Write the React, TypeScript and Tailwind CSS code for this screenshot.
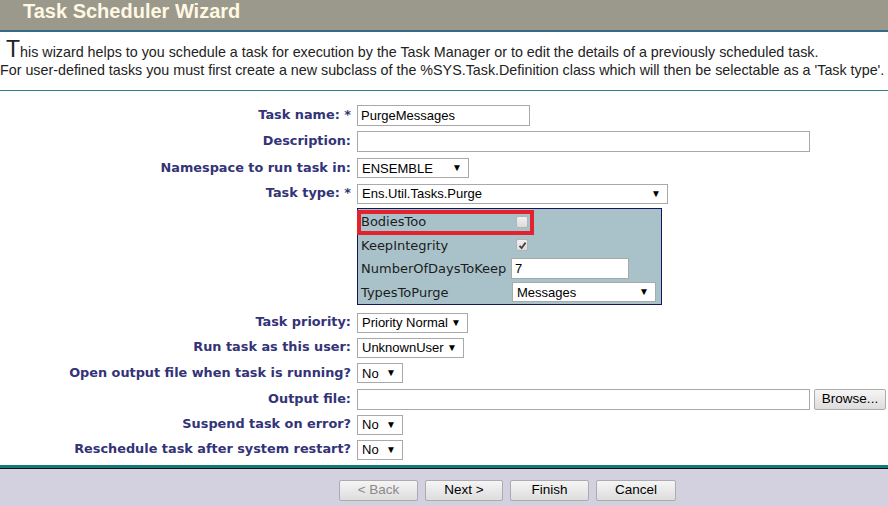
import React from "react";

const labelCls =
  "w-[351px] shrink-0 text-right font-bold text-[12.85px] text-[#333377] pr-0 leading-none";
const lblFont = { fontFamily: "Verdana, 'DejaVu Sans', sans-serif" } as React.CSSProperties;

function Select({ value, w }: { value: string; w: string }) {
  return (
    <div
      className={`${w} h-[20px] bg-white border border-[#a9a9a9] flex items-center justify-between pl-[4px] pr-[6px] text-[13px] text-black font-['Liberation_Sans',Arial,sans-serif]`}
    >
      <span className="leading-none">{value}</span>
      <span className="text-[10px] leading-none">▼</span>
    </div>
  );
}

function Input({ value, w }: { value?: string; w: string }) {
  return (
    <div
      className={`${w} h-[21px] bg-white border border-[#a9a9a9] flex items-center pl-[3px] text-[13px] text-black font-['Liberation_Sans',Arial,sans-serif]`}
    >
      <span className="leading-none">{value}</span>
    </div>
  );
}

function Row({ label, h, children }: { label: string; h: string; children: React.ReactNode }) {
  return (
    <div className={`flex items-center ${h}`}>
      <div className={labelCls} style={lblFont}>
        {label}
      </div>
      <div className="ml-[6px] flex items-center gap-[4px]">{children}</div>
    </div>
  );
}

function Btn({ label, disabled, w }: { label: string; disabled?: boolean; w: string }) {
  return (
    <div
      className={`${w} h-[21px] border border-[#acacac] rounded-[2px] bg-gradient-to-b from-[#f5f5f5] to-[#dddddd] flex items-center justify-center text-[13.5px] font-['Liberation_Sans',Arial,sans-serif] ${
        disabled ? "text-[#8a8a8a]" : "text-black"
      }`}
    >
      {label}
    </div>
  );
}

export default function App() {
  return (
    <div className="w-[888px] h-[506px] bg-white overflow-hidden flex flex-col font-['Liberation_Sans',Arial,sans-serif]">
      {/* Header */}
      <div className="h-[30px] bg-[#9b998c] flex items-start pl-[23px]">
        <span className="text-[20px] font-bold text-[#fff8e2] leading-none mt-[1px]">
          Task Scheduler Wizard
        </span>
      </div>
      <div className="h-[2px] bg-[#356a86]" />

      {/* Intro */}
      <div className="h-[58px] text-[14.3px] text-[#222] pt-[6px]">
        <div className="leading-[20px] pl-[6px]">
          <span className="text-[23px] leading-none">T</span>his wizard helps to you schedule a task for
          execution by the Task Manager or to edit the details of a previously scheduled task.
        </div>
        <div className="leading-[17px]">
          For user-defined tasks you must first create a new subclass of the %SYS.Task.Definition class
          which will then be selectable as a 'Task type'.
        </div>
      </div>
      <div className="h-[1px] bg-[#2f8088]" />

      {/* Form */}
      <div className="flex-1 flex flex-col pt-[11px]">
        <Row label="Task name: *" h="h-[26px]">
          <Input value="PurgeMessages" w="w-[173px]" />
        </Row>
        <Row label="Description:" h="h-[27px]">
          <Input w="w-[453px]" />
        </Row>
        <Row label="Namespace to run task in:" h="h-[26px]">
          <Select value="ENSEMBLE" w="w-[112px]" />
        </Row>
        <Row label="Task type: *" h="h-[25px]">
          <Select value="Ens.Util.Tasks.Purge" w="w-[311px]" />
        </Row>

        {/* Params box */}
        <div className="flex mt-[2px]">
          <div className="w-[351px] shrink-0" />
          <div className="ml-[6px] relative w-[305px] h-[97px] bg-[#a9c2ca] border border-[#14165a] pl-[3px] pt-[1px] flex flex-col">
            {[
              { l: "BodiesToo", c: "box" },
              { l: "KeepIntegrity", c: "check" },
              { l: "NumberOfDaysToKeep", c: "input" },
              { l: "TypesToPurge", c: "select" },
            ].map((r) => (
              <div key={r.l} className="h-[24px] flex items-center">
                <div
                  className="w-[150px] text-[13px] text-[#1c1c1c] leading-none"
                  style={lblFont}
                >
                  {r.l}
                </div>
                {r.c === "box" && (
                  <div className="ml-[5px] w-[12px] h-[12px] border border-[#b4b4b4] rounded-[2px] bg-gradient-to-b from-[#f0f0f0] to-[#dcdcdc]" />
                )}
                {r.c === "check" && (
                  <div className="ml-[5px] w-[12px] h-[12px] border border-[#b4b4b4] rounded-[2px] bg-gradient-to-b from-[#f0f0f0] to-[#dcdcdc] flex items-center justify-center">
                    <svg width="9" height="9" viewBox="0 0 9 9">
                      <path d="M1.5 4.8 L3.6 7 L7.6 1.6" stroke="#444" strokeWidth="1.8" fill="none" />
                    </svg>
                  </div>
                )}
                {r.c === "input" && (
                  <div className="w-[118px] h-[21px] bg-white border border-[#a9a9a9] flex items-center pl-[3px] text-[13px] text-black font-['Liberation_Sans',Arial,sans-serif]">
                    <span className="leading-none">7</span>
                  </div>
                )}
                {r.c === "select" && (
                  <div className="ml-[1px]">
                    <Select value="Messages" w="w-[144px]" />
                  </div>
                )}
              </div>
            ))}
            <div className="absolute left-[-1px] top-[1px] w-[177px] h-[25px] border-[4px] border-[#e2222c]" />
          </div>
        </div>

        <div className="h-[5px]" />
        <Row label="Task priority:" h="h-[25px]">
          <Select value="Priority Normal" w="w-[111px]" />
        </Row>
        <Row label="Run task as this user:" h="h-[25px]">
          <Select value="UnknownUser" w="w-[107px]" />
        </Row>
        <Row label="Open output file when task is running?" h="h-[26px]">
          <Select value="No" w="w-[46px]" />
        </Row>
        <Row label="Output file:" h="h-[26px]">
          <Input w="w-[453px]" />
          <Btn label="Browse..." w="w-[72px]" />
        </Row>
        <Row label="Suspend task on error?" h="h-[25px]">
          <Select value="No" w="w-[46px]" />
        </Row>
        <Row label="Reschedule task after system restart?" h="h-[25px]">
          <Select value="No" w="w-[46px]" />
        </Row>
      </div>

      {/* Footer */}
      <div className="h-[3px] bg-[#137a7a]" />
      <div className="h-[1px] bg-[#111]" />
      <div className="h-[37px] bg-[#d3d0df] flex items-start justify-center pt-[11px] gap-[7px] pl-[127px]">
        <Btn label="< Back" disabled w="w-[79px]" />
        <Btn label="Next >" w="w-[78px]" />
        <Btn label="Finish" w="w-[79px]" />
        <Btn label="Cancel" w="w-[80px]" />
      </div>
    </div>
  );
}
